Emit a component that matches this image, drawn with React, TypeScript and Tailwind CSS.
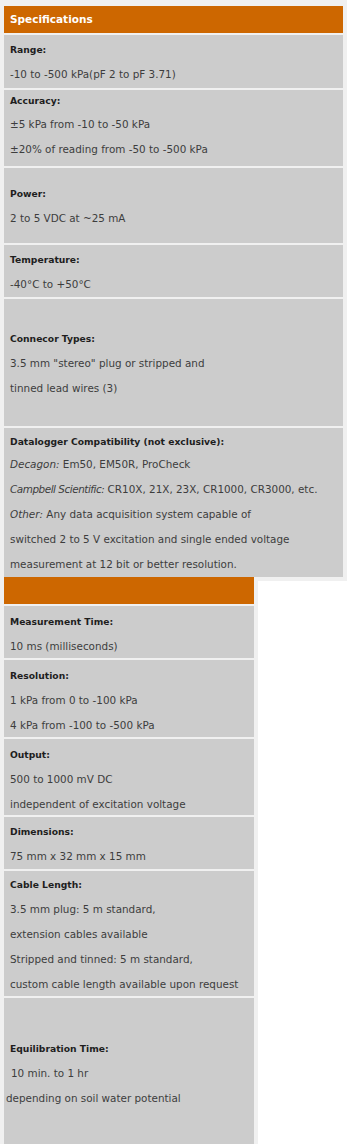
import type { ReactNode } from "react";

type Spec = {
  label: string;
  lines: ReactNode[];
  h: string;
  pt: string;
  labelLeading?: string;
};

const firstSpecs: Spec[] = [
  { label: "Range:", lines: ["-10 to -500 kPa(pF 2 to pF 3.71)"], h: "h-[53px]", pt: "pt-[2px]" },
  {
    label: "Accuracy:",
    lines: ["±5 kPa from -10 to -50 kPa", "±20% of reading from -50 to -500 kPa"],
    h: "h-[76px]",
    pt: "pt-0",
    labelLeading: "leading-[22px]",
  },
  { label: "Power:", lines: ["2 to 5 VDC at ~25 mA"], h: "h-[75px]", pt: "pt-[13px]" },
  { label: "Temperature:", lines: ["-40°C to +50°C"], h: "h-[52px]", pt: "pt-[2px]" },
  {
    label: "Connecor Types:",
    lines: ['3.5 mm "stereo" plug or stripped and', "tinned lead wires (3)"],
    h: "h-[127px]",
    pt: "pt-[27px]",
  },
  {
    label: "Datalogger Compatibility (not exclusive):",
    lines: [
      <>
        <i>Decagon:</i> Em50, EM50R, ProCheck
      </>,
      <>
        <i className="tracking-[-0.45px]">Campbell Scientific:</i> CR10X, 21X, 23X, CR1000, CR3000, etc.
      </>,
      <>
        <i>Other:</i> Any data acquisition system capable of
      </>,
      "switched 2 to 5 V excitation and single ended voltage",
      "measurement at 12 bit or better resolution.",
    ],
    h: "h-[149px]",
    pt: "pt-[4px]",
    labelLeading: "leading-[20px]",
  },
];

const secondSpecs: Spec[] = [
  { label: "Measurement Time:", lines: ["10 ms (milliseconds)"], h: "h-[52px]", pt: "pt-[3px]" },
  {
    label: "Resolution:",
    lines: ["1 kPa from 0 to -100 kPa", "4 kPa from -100 to -500 kPa"],
    h: "h-[77px]",
    pt: "pt-[3px]",
  },
  {
    label: "Output:",
    lines: ["500 to 1000 mV DC", "independent of excitation voltage"],
    h: "h-[76px]",
    pt: "pt-[3px]",
  },
  { label: "Dimensions:", lines: ["75 mm x 32 mm x 15 mm"], h: "h-[52px]", pt: "pt-[2px]" },
  {
    label: "Cable Length:",
    lines: [
      "3.5 mm plug: 5 m standard,",
      "extension cables available",
      "Stripped and tinned: 5 m standard,",
      "custom cable length available upon request",
    ],
    h: "h-[125px]",
    pt: "pt-[1px]",
  },
  {
    label: "Equilibration Time:",
    lines: [
      <span className="ml-[1px]">10 min. to 1 hr</span>,
      <span className="-ml-[4px]">depending on soil water potential</span>,
    ],
    h: "h-[160px]",
    pt: "pt-[38px]",
  },
];

function SpecRow({ spec }: { spec: Spec }) {
  return (
    <div className={`${spec.h} ${spec.pt} bg-[#cccccc] pl-[6px] overflow-hidden`}>
      <div className={`${spec.labelLeading ?? "leading-[25px]"} text-[9.2px] font-bold text-[#1e1e1e]`}>
        {spec.label}
      </div>
      {spec.lines.map((line, i) => (
        <div key={i} className="leading-[25px] text-[10.4px] text-[#3d3d3d] whitespace-nowrap">
          {line}
        </div>
      ))}
    </div>
  );
}

function Header({ title }: { title?: string }) {
  return (
    <div className="h-[27px] bg-[#cd6700] flex items-center pl-[6px] text-[10.5px] font-bold text-white">
      {title}
    </div>
  );
}

export default function App() {
  return (
    <div className="min-h-screen bg-white font-['DejaVu_Sans',Verdana,sans-serif]">
      <div className="w-[347px] bg-[#f0f0f0] pt-[6px] px-[4px] pb-[4px] flex flex-col gap-[2px]">
        <Header title="Specifications" />
        {firstSpecs.map((s) => (
          <SpecRow key={s.label} spec={s} />
        ))}
      </div>
      <div className="-mt-[4px] w-[258px] bg-[#f0f0f0] px-[4px] flex flex-col gap-[2px]">
        <Header />
        {secondSpecs.map((s) => (
          <SpecRow key={s.label} spec={s} />
        ))}
      </div>
    </div>
  );
}
